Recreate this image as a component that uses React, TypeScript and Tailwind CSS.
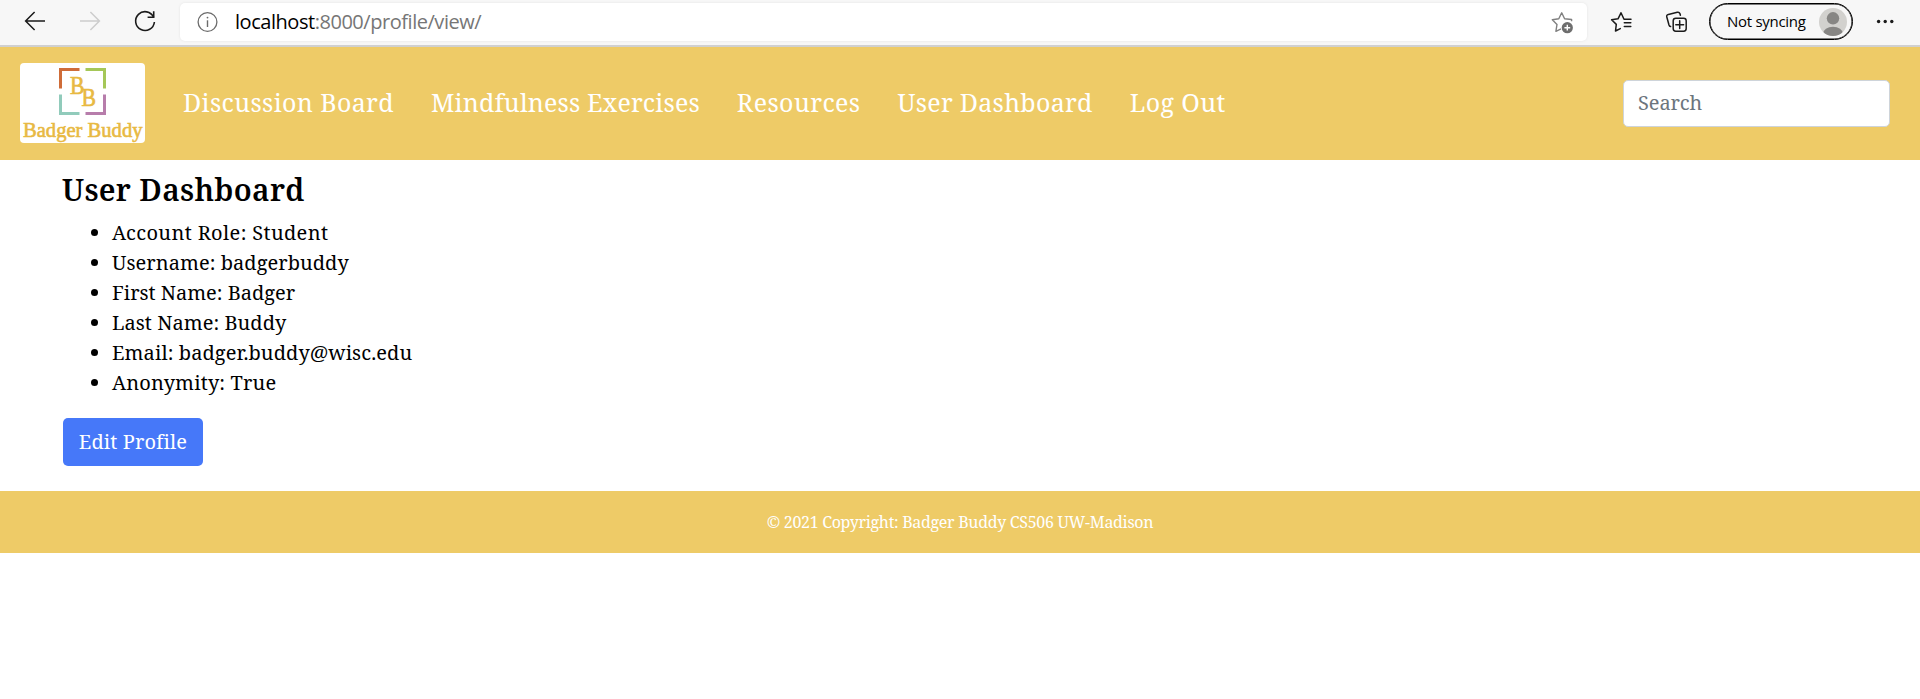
import React from "react";

const navLinks = [
  { label: "Discussion Board", tracking: "tracking-[0.36px]" },
  { label: "Mindfulness Exercises", tracking: "tracking-[0.15px]" },
  { label: "Resources", tracking: "tracking-[0.4px]" },
  { label: "User Dashboard", tracking: "tracking-[0.28px]" },
  { label: "Log Out", tracking: "tracking-[0.4px]" },
];

const profile = [
  { text: "Account Role: Student", tracking: "tracking-[0.36px]" },
  { text: "Username: badgerbuddy", tracking: "tracking-[0.05px]" },
  { text: "First Name: Badger", tracking: "tracking-[-0.02px]" },
  { text: "Last Name: Buddy", tracking: "tracking-[0.04px]" },
  { text: "Email: badger.buddy@wisc.edu", tracking: "tracking-[0.09px]" },
  { text: "Anonymity: True", tracking: "tracking-[0.15px]" },
];

function BrowserBar() {
  return (
    <div className="flex h-[47px] items-start border-b-2 border-[#d0d0d0] bg-[#f7f7f7] font-['Open_Sans',sans-serif]">
      <svg className="ml-5 h-[44px] w-[150px] shrink-0" viewBox="20 0 150 44" fill="none" strokeWidth="1.5">
        <path d="M45 21H25.6M34.6 12L25.6 21L34.6 30" stroke="#1b1b1b" />
        <path d="M80 21H99.4M90.4 12L99.4 21L90.4 30" stroke="#cdcdcd" />
        <path d="M153.6 17.2A9.4 9.4 0 1 0 154.4 22" stroke="#1b1b1b" strokeWidth="1.6" />
        <path d="M153.7 11.3V17.2H147.6" stroke="#1b1b1b" strokeWidth="1.6" />
      </svg>
      <div className="ml-[10px] mt-[3px] flex h-[38px] w-[1407px] shrink-0 items-center rounded-[5px] bg-white shadow-[0_0_3px_rgba(0,0,0,0.08)]">
        <svg className="ml-[16px] h-[24px] w-[24px]" viewBox="0 0 24 24" fill="none" stroke="#6b6b6b">
          <circle cx="11.5" cy="12" r="9.4" strokeWidth="1.3" />
          <path d="M11.5 10.3V17" strokeWidth="1.4" />
          <circle cx="11.5" cy="7.6" r="0.9" fill="#6b6b6b" stroke="none" />
        </svg>
        <span className="ml-[15px] whitespace-nowrap text-[20px] leading-[38px] tracking-[-0.46px] text-[#767676]">
          <span className="text-black">localhost</span>:8000/profile/view/
        </span>
        <svg className="ml-auto mr-[12px] h-[24px] w-[24px]" viewBox="1551 10 24 24" fill="none">
          <path d="M1571.6 21.2V19.5L1564.6 18.8L1561.7 12.8L1558.8 18.8L1552.3 19.7L1557 24.4L1555.9 31.3L1561 28.9" stroke="#808080" strokeWidth="1.4" strokeLinejoin="round" />
          <circle cx="1567.3" cy="27.7" r="5.6" fill="#6e6e6e" />
          <path d="M1564.4 27.7H1570.2M1567.3 24.8V30.6" stroke="#fff" strokeWidth="1.4" />
        </svg>
      </div>
      <svg className="ml-[21px] h-[44px] w-[84px] shrink-0" viewBox="1608 0 84 44" fill="none" stroke="#1b1b1b" strokeWidth="1.5" strokeLinejoin="round" strokeLinecap="round">
        <path d="M1631 19.3H1624L1621 12.8L1618 18.8L1611.6 19.8L1616.3 24.4L1615.5 31L1620.3 28.6" />
        <path d="M1624.3 22.7H1630.8M1624.3 26.6H1630.8" />
        <rect x="1673.2" y="18.2" width="13" height="13" rx="2.6" />
        <path d="M1679.7 20.8V28.6M1675.8 24.7H1683.6" />
        <path d="M1680.4 15.3L1680 13.8Q1679.3 11.9 1677.3 12.3L1668.4 14.4Q1666.3 15 1666.8 17L1669 25Q1669.4 26.3 1670.6 26.6" />
      </svg>
      <div className="ml-[17px] mt-[3px] flex h-[37px] w-[144px] shrink-0 items-center rounded-full border border-black bg-[#f7f7f7] shadow-[inset_0_0_0_0.5px_#000]">
        <span className="ml-[17px] w-[80px] whitespace-nowrap pb-px text-[15px] leading-[34px] tracking-[-0.28px] text-black">Not syncing</span>
        <svg className="ml-[12px] h-[28px] w-[28px]" viewBox="0 0 28 28">
          <clipPath id="avatar"><circle cx="14" cy="14" r="14" /></clipPath>
          <g clipPath="url(#avatar)">
            <rect width="28" height="28" fill="#d2d1ce" />
            <circle cx="14" cy="10.3" r="6.2" fill="#878684" />
            <ellipse cx="14" cy="26" rx="10" ry="7.3" fill="#878684" />
          </g>
        </svg>
      </div>
      <svg className="ml-[20px] h-[44px] w-[26px] shrink-0" viewBox="1873 0 26 44" fill="#1b1b1b">
        <circle cx="1878.6" cy="21.5" r="1.7" />
        <circle cx="1885.2" cy="21.5" r="1.7" />
        <circle cx="1891.8" cy="21.5" r="1.7" />
      </svg>
    </div>
  );
}

function Logo() {
  return (
    <svg className="h-[80px] w-[125px] shrink-0 rounded-[4px] bg-white" viewBox="0 0 125 80" fontFamily="'Liberation Serif', serif" fill="#e8b942" stroke="#e8b942" strokeWidth="0.35">
      <g fill="none" strokeWidth="3">
        <path d="M40.5 25.5V6.5H59.5" stroke="#cf6c38" />
        <path d="M65.5 6.5H84.5V25.5" stroke="#a5c758" />
        <path d="M40.5 31.5V50.5H59.5" stroke="#91cbbb" />
        <path d="M65.5 50.5H84.5V31.5" stroke="#b77dab" />
      </g>
      <text x="50" y="31" fontSize="26" strokeWidth="0.7" textLength="14.5" lengthAdjust="spacingAndGlyphs">B</text>
      <text x="61.5" y="42.5" fontSize="26" strokeWidth="0.7" textLength="14.5" lengthAdjust="spacingAndGlyphs">B</text>
      <text x="3" y="73.8" fontSize="21" strokeWidth="0.6" textLength="119.5" lengthAdjust="spacingAndGlyphs">Badger Buddy</text>
    </svg>
  );
}

export default function App() {
  return (
    <div className="min-h-[699px] bg-white font-['Noto_Serif','DejaVu_Serif_Condensed',serif] text-[20px] leading-[30px] text-black">
      <BrowserBar />
      <nav className="flex h-[113px] items-center bg-[#eecb67] pl-5 pr-[30px]">
        <div className="-mt-[1px]"><Logo /></div>
        <div className="-mt-[3px] ml-[38px] flex gap-[37px] text-[25px] leading-[38px] text-white">
          {navLinks.map((l) => (
            <a key={l.label} className={"whitespace-nowrap " + l.tracking}>{l.label}</a>
          ))}
        </div>
        <input
          placeholder="Search"
          className="ml-auto h-[47px] w-[267px] rounded-[5px] border border-[#ced4da] bg-white pb-[2px] pl-[14px] tracking-[-0.1px] placeholder:text-[#6c757d]"
        />
      </nav>
      <main className="h-[331px] px-[62px] pt-[11px]">
        <h1 className="text-[30px] font-semibold leading-[38px] tracking-[0.3px]">User Dashboard</h1>
        <ul className="mt-[9px] list-disc pl-[50px]">
          {profile.map((p) => (
            <li key={p.text} className={p.tracking}>{p.text}</li>
          ))}
        </ul>
        <button className="ml-[1px] mt-[20px] h-[48px] w-[140px] whitespace-nowrap rounded-[5px] bg-[#4678f9] tracking-[0.1px] text-white">Edit Profile</button>
      </main>
      <footer className="flex h-[62px] items-center justify-center bg-[#eecb67] pb-px text-[16px] text-white">
        <span className="tracking-[-0.31px]">© 2021 Copyright: Badger Buddy CS506 UW-Madison</span>
      </footer>
    </div>
  );
}
